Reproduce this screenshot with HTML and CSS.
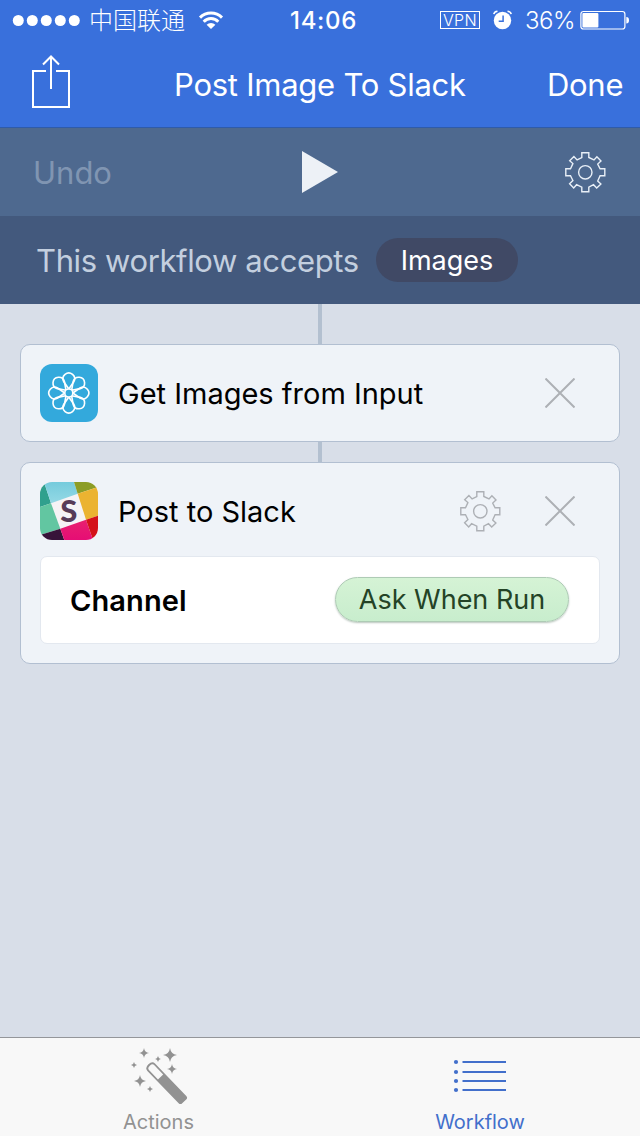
FILE: index.html
```
<!DOCTYPE html>
<html lang="en">
<head>
<meta charset="utf-8">
<title>Post Image To Slack</title>
<link rel="stylesheet" href="styles.css">
</head>
<body>
<svg width="0" height="0" class="defs">
  <defs>
    <path id="gear" d="M-3.5-19.5H3.5V-14.8L8.7-12.4L11.6-15.6L15.7-11.4L12.4-8.2L14.8-3.5H19.5V3.5H14.8L12.4 8.7L15.6 11.6L11.4 15.7L8.2 12.4L3.5 14.8V19.5H-3.5V14.8L-8.7 12.4L-11.6 15.6L-15.7 11.4L-12.4 8.2L-14.8 3.5H-19.5V-3.5H-14.8L-12.4-8.7L-15.6-11.6L-11.4-15.7L-8.2-12.4L-3.5-14.8Z"/>
    <path id="petal" d="M0 -4L-5 -11.2A5.8 5.8 0 1 1 5 -11.2Z"/>
    <path id="star" d="M0-1Q.12-.12 1 0Q.12.12 0 1Q-.12.12-1 0Q-.12-.12 0-1Z"/>
  </defs>
</svg>
<div class="screen">
  <header class="top">
    <div class="status">
      <div class="status-left">
        <svg width="70" height="12" viewBox="0 0 70 12" fill="#fff"><circle cx="6.3" cy="6.5" r="5.5"/><circle cx="20.3" cy="6.5" r="5.5"/><circle cx="34.3" cy="6.5" r="5.5"/><circle cx="48.3" cy="6.5" r="5.5"/><circle cx="62.3" cy="6.5" r="5.5"/></svg>
        <span class="carrier">中国联通</span>
        <svg class="wifi" width="26" height="20" viewBox="0 0 26 20" fill="none" stroke="#fff" stroke-width="3"><path d="M2 7.6A15.6 15.6 0 0 1 24 7.6"/><path d="M5.7 11.7A10.2 10.2 0 0 1 20.3 11.7"/><path d="M13 19L8.6 14.8A6.2 6.2 0 0 1 17.4 14.8Z" fill="#fff" stroke="none"/></svg>
      </div>
      <span class="time">14:06</span>
      <div class="status-right">
        <span class="vpn">VPN</span>
        <svg class="alarm" width="20" height="20" viewBox="0 0 20 20"><circle cx="9.5" cy="10.5" r="8.7" fill="#fff"/><path d="M.8 4.2Q1.3 1.5 4.5 1.2M18.2 4.2Q17.7 1.5 14.5 1.2" fill="none" stroke="#fff" stroke-width="1.6"/><path d="M10.1 5.5V11.3H5.7" fill="none" stroke="#3970dc" stroke-width="1.5"/></svg>
        <span class="percent">36%</span>
        <svg class="battery" width="50" height="20" viewBox="0 0 50 20"><rect x=".9" y="1.5" width="44" height="17.5" rx="2.5" fill="none" stroke="#fff" stroke-width="1.2"/><rect x="2.4" y="3" width="16" height="14.5" rx="1" fill="#fff"/><path d="M46.3 7Q49 7 49 10.3T46.3 13.6Z" fill="#fff"/></svg>
      </div>
    </div>
    <nav class="nav">
      <svg class="share" width="40" height="56" viewBox="0 0 40 56" fill="none" stroke="#fff" stroke-width="2"><path d="M15 16H2V52H38V16H25"/><path d="M20 34V2M12 9.5L20 1.5L28 9.5"/></svg>
      <h1 class="title">Post Image To Slack</h1>
      <span class="done">Done</span>
    </nav>
  </header>
  <div class="toolbar">
    <span class="undo">Undo</span>
    <svg class="play" width="36" height="42" viewBox="0 0 36 42"><path d="M0 0L36 21L0 42Z" fill="#edf1f6"/></svg>
    <svg class="settings" width="42" height="42" viewBox="-21.3 -21.3 42 42" fill="none" stroke="#e8eff7" stroke-width="1.4"><use href="#gear"/><circle r="6.7"/></svg>
  </div>
  <div class="accepts">
    <span class="accepts-text">This workflow accepts</span>
    <span class="type"><span>Images</span></span>
  </div>
  <main class="flow">
    <div class="link link-first"></div>
    <section class="card">
      <div class="action">
        <svg class="app" width="58" height="58" viewBox="0 0 58 58"><rect width="58" height="58" rx="12" fill="#33a9dc"/><g transform="translate(28.8 29)" fill="none" stroke="#fff" stroke-width="1.6"><use href="#petal"/><use href="#petal" transform="rotate(45)"/><use href="#petal" transform="rotate(90)"/><use href="#petal" transform="rotate(135)"/><use href="#petal" transform="rotate(180)"/><use href="#petal" transform="rotate(225)"/><use href="#petal" transform="rotate(270)"/><use href="#petal" transform="rotate(315)"/><circle r="4" fill="#33a9dc"/></g></svg>
        <h2 class="name get">Get Images from Input</h2>
        <svg class="close" width="30" height="30" viewBox="0 0 30 30" stroke="#adb0b5" stroke-width="2"><path d="M.5.5L29.5 29.5M29.5.5L.5 29.5"/></svg>
      </div>
    </section>
    <div class="link"></div>
    <section class="card">
      <div class="action">
        <svg class="app" width="58" height="58" viewBox="0 0 58 58">
          <defs><clipPath id="tile"><rect width="58" height="58" rx="12"/></clipPath><linearGradient id="sky" x2="0" y2="1"><stop stop-color="#75cbdc"/><stop offset="1" stop-color="#94d9e5"/></linearGradient><linearGradient id="pink" x2="0" y2="1"><stop stop-color="#e8206f"/><stop offset="1" stop-color="#e60d75"/></linearGradient></defs>
          <g clip-path="url(#tile)"><rect width="58" height="58" fill="#f5f3f5"/>
          <path d="M0 0H4L11 21.3L0 25Z" fill="#30a08d"/><path d="M4 0H34L37.7 11.7L11 21.3Z" fill="url(#sky)"/><path d="M34 0H58V5L37.7 11.7Z" fill="#8c9d26"/><path d="M0 25L11 21.3L20.3 46.7L0 53Z" fill="#62c6a1"/><path d="M37.7 11.7L58 5V33.7L46 37.7Z" fill="#ebb331"/><path d="M0 53L20.3 46.7L24.3 58H0Z" fill="#371339"/><path d="M20.3 46.7L46 37.7L53 58H24.3Z" fill="url(#pink)"/><path d="M46 37.7L58 33.7V58H53Z" fill="#d41119"/></g>
          <text x="28.8" y="39.5" text-anchor="middle" class="slack-s">S</text>
        </svg>
        <h2 class="name slack">Post to Slack</h2>
        <svg class="gear" width="42" height="42" viewBox="-20.3 -21.3 42 42" fill="none" stroke="#adb0b5" stroke-width="1.4"><use href="#gear"/><circle r="6.7"/></svg>
        <svg class="close" width="30" height="30" viewBox="0 0 30 30" stroke="#adb0b5" stroke-width="2"><path d="M.5.5L29.5 29.5M29.5.5L.5 29.5"/></svg>
      </div>
      <div class="field">
        <span class="label">Channel</span>
        <span class="token"><span>Ask When Run</span></span>
      </div>
    </section>
  </main>
  <footer class="tabs">
    <div class="tab">
      <svg class="tab-icon" width="60" height="60" viewBox="0 0 60 60" fill="#929292"><g transform="translate(20.5 22.5) rotate(46)"><path d="M1-5.3H46A2.5 2.5 0 0 1 48.5-2.8V2.8A2.5 2.5 0 0 1 46 5.3H1Q-3 5.3-3 0T1-5.3Z"/><path d="M1.5-3.6H14.5V3.6H1.5Q-1 3.6-1 0T1.5-3.6Z" fill="#f8f8f8"/></g><use href="#star" transform="translate(14 9) scale(5)"/><use href="#star" transform="translate(40 11) scale(7)"/><use href="#star" transform="translate(28 15) scale(3.3)"/><use href="#star" transform="translate(42 25) scale(5)"/><use href="#star" transform="translate(4 21) scale(3)"/><use href="#star" transform="translate(10 37) scale(6)"/><use href="#star" transform="translate(20 45) scale(3)"/></svg>
      <span class="tab-label actions">Actions</span>
    </div>
    <div class="tab active">
      <svg class="tab-icon" width="60" height="60" viewBox="0 0 60 60" fill="#426fcb" stroke="#426fcb"><path d="M12.5 18H56M12.5 28H56M12.5 37H56M12.5 46H56" stroke-width="2"/><g stroke="none"><circle cx="6" cy="18" r="2.1"/><circle cx="6" cy="28" r="2.1"/><circle cx="6" cy="37" r="2.1"/><circle cx="6" cy="46" r="2.1"/></g></svg>
      <span class="tab-label workflow">Workflow</span>
    </div>
  </footer>
</div>
</body>
</html>
```
FILE: styles.css
```
* { box-sizing: border-box; }
body { margin: 0; font-family: Inter, "Noto Sans CJK SC", sans-serif; }
svg { display: block; flex: none; }
.defs { height: 0; }
h1, h2 { margin: 0; font-weight: 400; }
span, h1, h2 { white-space: nowrap; }
.screen { width: 640px; height: 1136px; display: flex; flex-direction: column; background: #d8dee8; overflow: hidden; }
.top { height: 128px; background: #3970dc; border-bottom: 1px solid #2f5ba9; color: #fff; }
.status { height: 40px; display: grid; grid-template-columns: 290px 150px 200px; align-items: center; }
.status-left { display: flex; align-items: center; padding-left: 12px; height: 40px; }
.carrier { font: 300 24px/36px "Noto Sans CJK SC", sans-serif; margin: 0 0 2px 7px; width: 97px; }
.wifi { margin: 0 0 1px 12px; }
.time { font-size: 24px; font-weight: 500; line-height: 38px; letter-spacing: .7px; padding-top: 1px; }
.status-right { display: flex; align-items: center; height: 40px; }
.vpn { width: 40px; height: 18px; border: 1px solid #fff; font-size: 16px; line-height: 17px; text-align: center; font-weight: 300; letter-spacing: .4px; }
.alarm { margin-left: 13px; }
.percent { margin-left: 12px; width: 55px; font-size: 24px; font-weight: 300; letter-spacing: -.5px; padding-top: 1px; }
.nav { display: grid; grid-template-columns: 174px 373px 93px; align-items: center; height: 88px; }
.share { margin: 0 0 2px 31px; }
.title, .done { font-size: 31px; line-height: 36px; padding-top: 1px; }
.title { letter-spacing: -.25px; }
.done { letter-spacing: -.3px; }
.toolbar { height: 88px; background: #4e698f; display: grid; grid-template-columns: 302px 262px 76px; align-items: center; }
.undo { padding-left: 33px; font-size: 31px; letter-spacing: 0; color: #8095b2; }
.accepts { height: 88px; background: #43597d; display: flex; align-items: center; padding-left: 37px; color: #c3cfdf; font-size: 31px; }
.accepts-text { width: 340px; margin-left: -1px; letter-spacing: -.38px; }
.type { width: 142px; height: 44px; border-radius: 22px; background: #404965; color: #fff; font-size: 27px; line-height: 45px; text-align: center; }
.flow { flex: 1; padding: 0 20px; }
.link { width: 4px; height: 20px; margin: 0 auto; background: #b3c0d0; }
.link-first { height: 40px; }
.card { border: 1px solid #b2bfd1; border-radius: 10px; background: #eff3f8; padding: 19px; }
.action { height: 58px; display: flex; align-items: center; color: #000; }
.name { margin-left: 20px; flex: 1; font-size: 29px; line-height: 36px; padding-top: 2px; }
.gear { margin-right: 43px; }
.close { margin-right: 25px; }
.slack-s { font: 900 31px Lato, sans-serif; fill: #573b57; }
.field { height: 88px; margin-top: 16px; background: #fff; border: 1px solid #e3e8ef; border-radius: 7px; display: flex; align-items: center; justify-content: space-between; padding: 0 30px 0 29px; }
.label { font-size: 29px; font-weight: 600; letter-spacing: .1px; }
.token { width: 234px; height: 45px; margin-bottom: 2px; border: 1px solid #aecbb5; border-radius: 23px; background: linear-gradient(#d5f3d5, #c8edcd); box-shadow: 0 1px 2px #b9c5bd; color: #244326; font-size: 27px; line-height: 43px; text-align: center; }
.tabs { height: 99px; border-top: 1px solid #94969a; background: #f8f8f8; display: grid; grid-template-columns: 1fr 1fr; color: #929292; }
.tab { display: flex; flex-direction: column; align-items: center; padding-top: 6px; }
.active { color: #426fcb; }
.tab-label { font-size: 20px; line-height: 24px; margin-top: 6px; }
.actions { margin-right: 3px; }
```
